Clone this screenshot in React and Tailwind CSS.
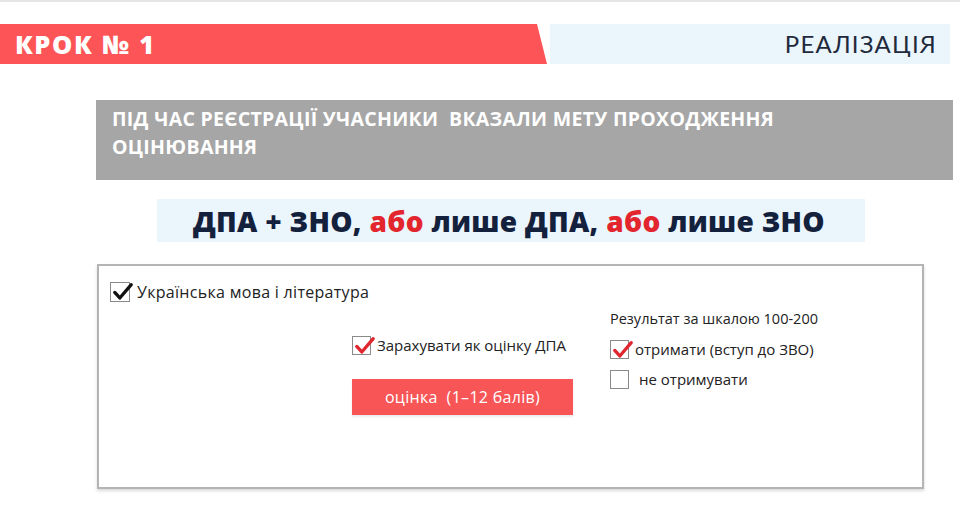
import React from "react";

function Box({ checked, color = "black", size = 20 }) {
  return (
    <span
      className="relative inline-block shrink-0 border border-[#8a8a8a] bg-white"
      style={{ width: size, height: size }}
    >
      {checked && (
        <svg
          viewBox="0 0 24 24"
          className="absolute left-[1px] top-[-2px] h-[22px] w-[22px]"
          fill="none"
          stroke={color === "red" ? "#e0262e" : "#111"}
          strokeWidth="3.6"
          strokeLinecap="round"
          strokeLinejoin="round"
        >
          <path d="M3 12.5l5.5 6L21 4" />
        </svg>
      )}
    </span>
  );
}

export default function App() {
  return (
    <div className="h-[532px] w-[960px] overflow-hidden bg-white font-['Open_Sans','Noto_Sans',sans-serif]">
      <div className="h-[2px] w-full bg-[#e6e6e6]" />
      <div className="mt-[22px] flex h-[40px]">
        <div className="flex w-[547px] items-center bg-[#fd5557] pl-[15px] [clip-path:polygon(0_0,537px_0,547px_100%,0_100%)]">
          <span className="text-[25.5px] font-extrabold tracking-[1.6px] text-white">КРОК № 1</span>
        </div>
        <div className="ml-[3px] flex w-[400px] items-center justify-end bg-[#ebf5fc] pr-[13px]">
          <span className="font-['Lato','Noto_Sans',sans-serif] text-[24px] font-normal tracking-[1.2px] text-[#1f2a3c]">РЕАЛІЗАЦІЯ</span>
        </div>
      </div>

      <div className="ml-[96px] mt-[36px] h-[80px] w-[857px] bg-[#a6a6a6] px-[16px] pt-[5px]">
        <p className="text-[19.5px] font-bold leading-[28px] tracking-[0.3px] text-white">
          ПІД ЧАС РЕЄСТРАЦІЇ УЧАСНИКИ&nbsp; ВКАЗАЛИ МЕТУ ПРОХОДЖЕННЯ
          <br />
          ОЦІНЮВАННЯ
        </p>
      </div>

      <div className="ml-[157px] mt-[19px] flex h-[43px] w-[708px] items-center bg-[#ebf5fc] pl-[36px]">
        <span className="text-[28px] font-extrabold tracking-[0.3px] text-[#14213d]">
          ДПА + ЗНО, <span className="text-[#e3262d]">або</span> лише ДПА,{" "}
          <span className="text-[#e3262d]">або</span> лише ЗНО
        </span>
      </div>

      <div className="ml-[97px] mt-[22px] h-[225px] w-[827px] border-2 border-[#b4b4b4] shadow-[0_2px_3px_rgba(0,0,0,0.15)]">
        <div className="ml-[11px] mt-[14px] flex items-center gap-[7px]">
          <Box checked />
          <span className="text-[16px] tracking-[0.3px] text-[#222]">Українська мова і література</span>
        </div>

        <div className="flex">
          <div className="ml-[253px] mt-[30px] w-[221px]">
            <div className="flex items-center gap-[6px]">
              <Box checked color="red" size={19} />
              <span className="text-[15px] text-[#222]">Зарахувати як оцінку ДПА</span>
            </div>
            <div className="mt-[22px] flex h-[36px] items-center justify-center bg-[#f75556] shadow-[0_2px_2px_rgba(0,0,0,0.08)]">
              <span className="text-[16px] tracking-[0.3px] text-white">оцінка&nbsp; (1–12 балів)</span>
            </div>
          </div>

          <div className="ml-[37px] mt-[4px]">
            <div className="text-[14.5px] text-[#222]">Результат за шкалою 100-200</div>
            <div className="mt-[8px] flex items-center gap-[6px]">
              <Box checked color="red" size={19} />
              <span className="text-[15px] text-[#222]">отримати (вступ до ЗВО)</span>
            </div>
            <div className="mt-[8px] flex items-center gap-[10px]">
              <Box size={19} />
              <span className="text-[15px] text-[#222]">не отримувати</span>
            </div>
          </div>
        </div>
      </div>
    </div>
  );
}
